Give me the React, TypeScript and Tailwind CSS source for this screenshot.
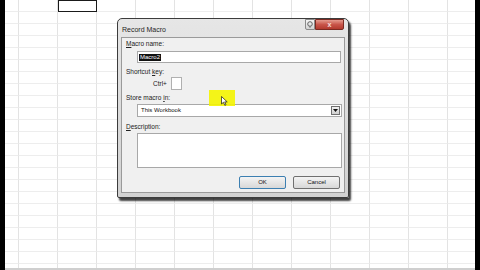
import React from "react";

const COLS = 13;
const ROWS = 23;

function Sheet() {
  const cells: React.ReactNode[] = [];
  for (let r = 0; r < ROWS; r++) {
    for (let c = 0; c < COLS; c++) {
      const sel = r === 0 && c === 2;
      cells.push(
        <div
          key={`${r}-${c}`}
          className={
            sel
              ? "border border-[#1a1a1a]"
              : "border-r-[1.5px] border-b border-r-[#e3e3e3] border-b-[#ededed]"
          }
        />
      );
    }
  }
  return (
    <div className="grid grid-cols-[14px_repeat(12,39px)] grid-rows-[repeat(23,12px)] w-full h-full overflow-hidden bg-white">
      {cells}
    </div>
  );
}

function Label({ children }: { children: React.ReactNode }) {
  return <div className="text-[6.5px] leading-[8px] text-[#222] pl-[4px]">{children}</div>;
}

export default function App() {
  return (
    <div
      className="w-[480px] h-[270px] flex bg-black overflow-hidden"
      style={{ fontFamily: '"Liberation Sans", Arial, sans-serif' }}
    >
      <div className="w-[5px] h-full bg-black" />
      <div className="relative w-[470px] h-full flex flex-col">
        <div className="flex-1 overflow-hidden">
          <Sheet />
        </div>
        <div className="h-[2px] bg-[#cfcfcf]" />

        {/* Dialog */}
        <div className="absolute left-[112px] top-[18px] w-[232px] h-[180px] rounded-t-[5px] rounded-b-[2px] border border-[#3c3c3c] bg-gradient-to-b from-[#e6e6e6] to-[#d2d2d2] shadow-[2px_3px_2px_rgba(0,0,0,0.75)] flex flex-col px-[3px] pb-[4px]">
          {/* Title bar */}
          <div className="h-[18px] flex items-start justify-between">
            <div className="text-[7px] text-[#1e1e1e] mt-[6px] pl-[1px]">Record Macro</div>
            <div className="flex mr-[1px]">
              <div className="w-[10px] h-[11px] border border-[#8a8a8a] rounded-bl-[2px] bg-gradient-to-b from-[#f4f4f4] to-[#d4d4d4] flex items-center justify-center">
                <svg width="6" height="7" viewBox="0 0 6 7">
                  <circle cx="3" cy="3" r="2.3" fill="none" stroke="#555" strokeWidth="0.9" />
                  <rect x="2.5" y="5.5" width="1" height="1.2" fill="#555" />
                </svg>
              </div>
              <div className="w-[29px] h-[11px] border border-[#7a2a22] rounded-br-[2px] bg-gradient-to-b from-[#e39a8e] via-[#c8554a] to-[#b2392d] flex items-center justify-center">
                <span className="text-[7px] leading-none font-bold text-white/80">x</span>
              </div>
            </div>
          </div>

          {/* Inner panel */}
          <div className="flex-1 border border-[#9a9a9a] bg-[#f0f0f0] flex flex-col">
            <div className="mt-[2px]">
              <Label>
                <span className="underline">M</span>acro name:
              </Label>
            </div>
            <div className="ml-[15px] mr-[3px] mt-[3px] h-[12px] border border-[#a8a8a8] bg-white flex items-center px-[1px]">
              <span className="bg-[#111] text-white text-[6px] leading-[7px] px-[1px]">Macro2</span>
            </div>
            <div className="mt-[5px]">
              <Label>
                Shortcut <span className="underline">k</span>ey:
              </Label>
            </div>
            <div className="flex items-center mt-[1px] ml-[31px]">
              <span className="text-[6.5px] text-[#1a1a1a]">Ctrl+</span>
              <div className="ml-[4px] w-[11px] h-[13px] border border-[#b0b0b0] bg-white" />
            </div>
            <div className="mt-[4px]">
              <Label>
                Store macro <span className="underline">i</span>n:
              </Label>
            </div>
            <div className="ml-[15px] mr-[2px] mt-[2px] h-[13px] border border-[#a8a8a8] bg-white flex items-center justify-between">
              <span className="text-[6px] text-[#111] pl-[3px]">This Workbook</span>
              <div className="w-[9px] h-[9px] mr-[1px] border border-[#707070] bg-gradient-to-b from-[#f2f2f2] to-[#cfcfcf] flex items-center justify-center">
                <svg width="5" height="3" viewBox="0 0 5 3">
                  <path d="M0 0 L5 0 L2.5 3 Z" fill="#111" />
                </svg>
              </div>
            </div>
            <div className="mt-[6px]">
              <Label>
                <span className="underline">D</span>escription:
              </Label>
            </div>
            <div className="ml-[15px] mr-[2px] mt-[2px] h-[35px] border border-[#a8a8a8] bg-white" />
            <div className="flex justify-end gap-[7px] mr-[4px] mt-[8px]">
              <div className="w-[47px] h-[13px] rounded-[2px] border border-[#3c7fb1] bg-gradient-to-b from-[#f4f4f4] to-[#d8d8d8] flex items-center justify-center text-[6px] text-[#111]">
                OK
              </div>
              <div className="w-[47px] h-[13px] rounded-[2px] border border-[#707070] bg-gradient-to-b from-[#f4f4f4] to-[#d8d8d8] flex items-center justify-center text-[6px] text-[#111]">
                Cancel
              </div>
            </div>
          </div>
        </div>

        {/* Cursor highlight */}
        <div className="absolute left-[204px] top-[90px] w-[26px] h-[16px] bg-[#f4f400]/90 flex items-start justify-start">
          <svg className="ml-[12px] mt-[6px]" width="7" height="10" viewBox="0 0 7 10">
            <path d="M0.5 0.5 L0.5 8 L2.4 6.3 L3.8 9.3 L5 8.8 L3.7 5.9 L6.2 5.9 Z" fill="white" stroke="#111" strokeWidth="0.7" />
          </svg>
        </div>
      </div>
      <div className="w-[5px] h-full bg-black" />
    </div>
  );
}
